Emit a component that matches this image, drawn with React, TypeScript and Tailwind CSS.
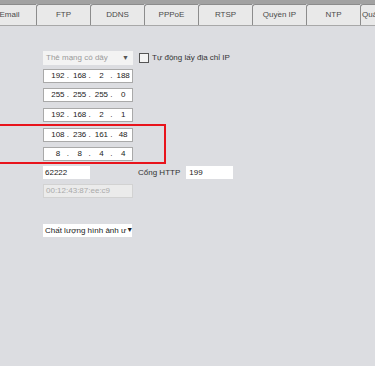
import React from 'react';

const tabs = ['Email', 'FTP', 'DDNS', 'PPPoE', 'RTSP', 'Quyền IP', 'NTP'];

const IpBox = ({ parts }: { parts: string[] }) => (
  <div className="flex h-[14px] w-[90px] items-center border border-[#a9a9a9] bg-white pl-[1px] text-[8px] text-[#222]">
    {parts.map((p, i) => (
      <div key={i} className="flex w-[22px] items-center">
        <span className="w-[4px] text-left">{i > 0 ? '.' : ''}</span>
        <span className="flex-1 text-center">{p}</span>
      </div>
    ))}
  </div>
);

export default function App() {
  return (
    <div
      className="h-[366px] w-[375px] overflow-hidden bg-[#dcdde1] text-[8px] text-[#222]"
      style={{ fontFamily: '"Liberation Sans", Arial, sans-serif' }}
    >
      {/* top strip */}
      <div className="h-[4px] bg-[#a2a2a2]" />

      {/* tab row */}
      <div className="flex h-[22px] border-b border-[#a8a8a8] bg-[#dedfe2]">
        <div className="-ml-[18px] flex">
          {tabs.map((t) => (
            <div
              key={t}
              className="flex h-[21px] w-[54px] shrink-0 items-center justify-center whitespace-nowrap rounded-tl-[3px] border-l border-t border-[#8c8c8c] bg-[#e9e9e9] text-[8px] text-[#4a4a4a]"
            >
              {t}
            </div>
          ))}
          <div className="flex h-[21px] w-[54px] shrink-0 items-center whitespace-nowrap rounded-tl-[3px] border-l border-t border-[#8c8c8c] bg-[#e9e9e9] pl-[1px] text-[8px] text-[#4a4a4a]">
            Quản lý
          </div>
        </div>
      </div>

      {/* form */}
      <div className="flex flex-col pl-[43px] pt-[25px]">
        <div className="flex h-[14px] items-center">
          <div className="flex h-[14px] w-[90px] items-center justify-between bg-[#f3f3f3] pl-[3px] pr-[4px] text-[#9a9a9a]">
            <span>Thẻ mạng có dây</span>
            <span className="text-[7px] text-[#555]">▼</span>
          </div>
          <div className="ml-[6px] h-[10px] w-[10px] border border-[#555] bg-[#f4f4f4]" />
          <span className="ml-[3px] text-[#333]">Tự động lấy địa chỉ IP</span>
        </div>

        <div className="mt-[4px]">
          <IpBox parts={['192', '168', '2', '188']} />
        </div>
        <div className="mt-[5px]">
          <IpBox parts={['255', '255', '255', '0']} />
        </div>
        <div className="mt-[6px]">
          <IpBox parts={['192', '168', '2', '1']} />
        </div>

        <div className="-ml-[53px] mt-[2px] flex w-[176px] flex-col border-2 border-[#e8141c] pb-[1px] pl-[51px] pt-[2px]">
          <IpBox parts={['108', '236', '161', '48']} />
          <div className="mt-[5px]">
            <IpBox parts={['8', '8', '4', '4']} />
          </div>
        </div>

        <div className="mt-[2px] flex h-[13px] items-center">
          <div className="flex h-[13px] w-[47px] items-center bg-white pl-[2px]">62222</div>
          <span className="ml-[48px] text-[#333]">Cổng HTTP</span>
          <div className="ml-[6px] flex h-[13px] w-[47px] items-center bg-white pl-[3px]">199</div>
        </div>

        <div className="mt-[5px] flex h-[14px] w-[90px] items-center border border-[#d2d2d2] bg-[#ebebeb] pl-[2px] text-[#aaa]">
          00:12:43:87:ee:c9
        </div>

        <div className="mt-[26px] flex h-[13px] w-[89px] items-center justify-between bg-white pl-[2px] pr-[2px] text-[#222]">
          <span className="whitespace-nowrap">Chất lượng hình ảnh ư</span>
          <span className="text-[7px]">▼</span>
        </div>
      </div>
    </div>
  );
}
